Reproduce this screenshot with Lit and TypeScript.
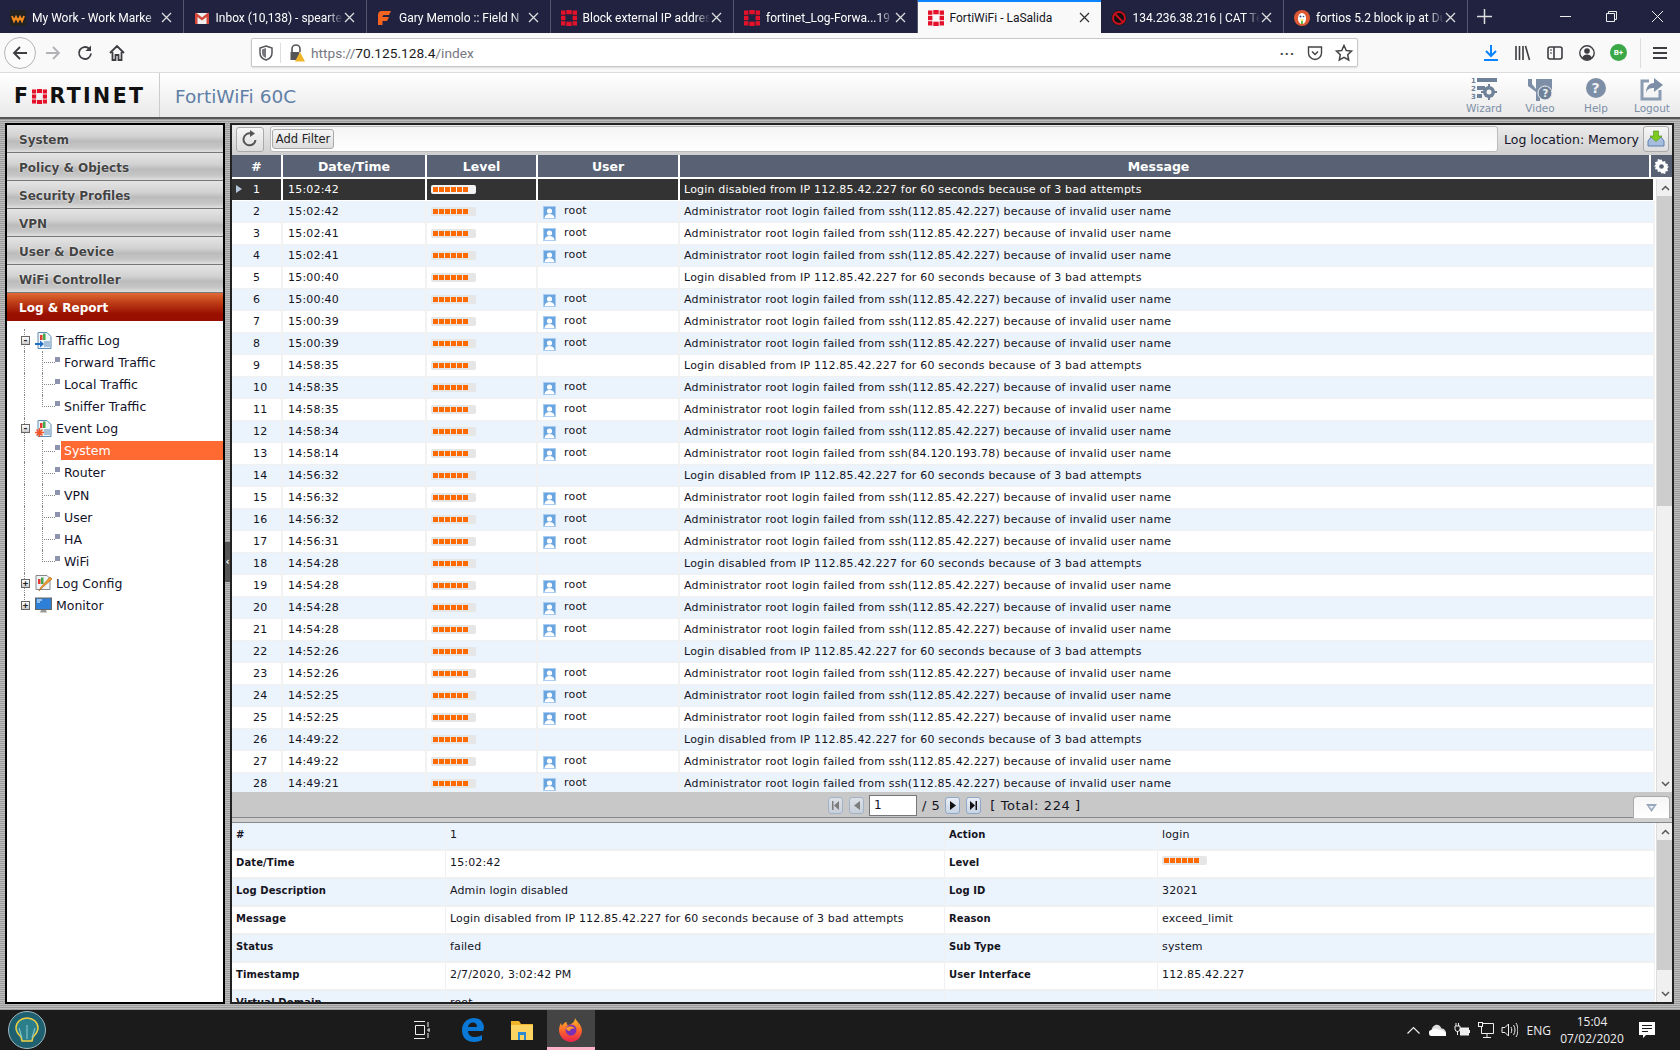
import { LitElement, html, css, svg } from "lit";
import { customElement } from "lit/decorators.js";

const fortiMark = (s: number) => html`<svg class="ico" width=${s} height=${s} viewBox="0 0 16 16"><g fill="#e3122a"><rect x="0" y="0.5" width="4.4" height="4.3"/><rect x="5.3" y="0" width="5.4" height="4.3"/><rect x="11.6" y="0.5" width="4.4" height="4.3"/><rect x="0" y="5.8" width="4.4" height="4.4"/><rect x="11.6" y="5.8" width="4.4" height="4.4"/><rect x="0" y="11.2" width="4.4" height="4.3"/><rect x="5.3" y="11.7" width="5.4" height="4.3"/><rect x="11.6" y="11.2" width="4.4" height="4.3"/></g></svg>`;

const TABS: { t: string; i: any; active?: boolean }[] = [
  { t: "My Work - Work Marke", i: html`<svg class="ico" width="16" height="16" viewBox="0 0 16 16"><rect width="16" height="16" rx="1" fill="#222"/><path d="M2 6l2 5 2-4 2 4 2-4 2 4 2-5" fill="none" stroke="#f58a1f" stroke-width="2"/></svg>` },
  { t: "Inbox (10,138) - spearte", i: html`<svg class="ico" width="16" height="16" viewBox="0 0 16 16"><rect x="1" y="3" width="14" height="11" fill="#eee"/><path d="M1 3v11h2.5V7L8 10.5 12.5 7v7H15V3h-1.5L8 7.5 2.5 3z" fill="#d5463a"/></svg>` },
  { t: "Gary Memolo :: Field N", i: html`<svg class="ico" width="16" height="16" viewBox="0 0 16 16"><path d="M1 15V5q0-4 4-4h9L12 5H7Q5.500 5 5.500 6.500V7H12l-2 4H5.500v4z" fill="#f4641e"/></svg>` },
  { t: "Block external IP addres", i: fortiMark(16) },
  { t: "fortinet_Log-Forwa...19", i: fortiMark(16) },
  { t: "FortiWiFi - LaSalida", i: fortiMark(16), active: true },
  { t: "134.236.38.216 | CAT Tel", i: html`<svg class="ico" width="16" height="16" viewBox="0 0 16 16"><circle cx="8" cy="8" r="7.500" fill="#111"/><circle cx="8" cy="8" r="6" fill="none" stroke="#c8101f" stroke-width="2"/><path d="M3.500 3.500l9 9" stroke="#c8101f" stroke-width="2"/></svg>` },
  { t: "fortios 5.2 block ip at Du", i: html`<svg class="ico" width="16" height="16" viewBox="0 0 16 16"><circle cx="8" cy="8" r="8" fill="#de5833"/><ellipse cx="8" cy="8.500" rx="4" ry="5.500" fill="#fff"/><circle cx="6.500" cy="6.500" r="1" fill="#2d4f8e"/><circle cx="9.500" cy="6.500" r=".8" fill="#2d4f8e"/><path d="M6 9.500h4l-2 1.500z" fill="#fdd20a"/><path d="M7 11h2v3H7z" fill="#65bc46"/></svg>` },
];

const MENU = ["System", "Policy & Objects", "Security Profiles", "VPN", "User & Device", "WiFi Controller"];

type R = [string, boolean, string?];
const ROWS: R[] = [
  ["15:02:42", true], ["15:02:42", false], ["15:02:41", false], ["15:02:41", false],
  ["15:00:40", true], ["15:00:40", false], ["15:00:39", false], ["15:00:39", false],
  ["14:58:35", true], ["14:58:35", false], ["14:58:35", false], ["14:58:34", false],
  ["14:58:14", false, "84.120.193.78"], ["14:56:32", true], ["14:56:32", false], ["14:56:32", false],
  ["14:56:31", false], ["14:54:28", true], ["14:54:28", false], ["14:54:28", false],
  ["14:54:28", false], ["14:52:26", true], ["14:52:26", false], ["14:52:25", false],
  ["14:52:25", false], ["14:49:22", true], ["14:49:22", false], ["14:49:21", false],
];

const DISABLED = "Login disabled from IP 112.85.42.227 for 60 seconds because of 3 bad attempts";
const failed = (ip: string) => `Administrator root login failed from ssh(${ip}) because of invalid user name`;

const bar = () => html`<span class="bar">${[0, 1, 2, 3, 4, 5].map(() => html`<i></i>`)}</span>`;

const userIcon = html`<svg class="uicon" width="13" height="13" viewBox="0 0 13 13"><rect width="13" height="13" fill="#a9cdf0"/><rect x="1" y="1" width="11" height="11" fill="#6aa5e0"/><circle cx="6.500" cy="5" r="2.600" fill="#fff"/><path d="M1.500 12c.5-3 2.500-4 5-4s4.500 1 5 4z" fill="#fff"/></svg>`;

const DETAILS: [string, any, string, any][] = [
  ["#", "1", "Action", "login"],
  ["Date/Time", "15:02:42", "Level", bar()],
  ["Log Description", "Admin login disabled", "Log ID", "32021"],
  ["Message", DISABLED, "Reason", "exceed_limit"],
  ["Status", "failed", "Sub Type", "system"],
  ["Timestamp", "2/7/2020, 3:02:42 PM", "User Interface", "112.85.42.227"],
  ["Virtual Domain", "root", "", ""],
];

const tb = (w: number, inner: any, h = 18, vb = "0 0 18 18") => html`<svg class="ico" width=${w} height=${h} viewBox=${vb}>${inner}</svg>`;

@customElement("app-root")
export class AppRoot extends LitElement {
  static styles = css`
    :host { display: block; width: 1680px; height: 1050px; overflow: hidden; font-family: "DejaVu Sans", Verdana, sans-serif; }
    * { box-sizing: border-box; }
    .ico { display: block; flex: none; }
    .root { display: flex; flex-direction: column; height: 1050px; }

    .tabs { height: 33px; background: #20223f; display: flex; flex: none; font-family: Roboto, sans-serif; font-size: 12px; color: #fff; }
    .tab { width: 183.500px; display: flex; align-items: center; padding: 2px 11px 0 10px; gap: 6px; border-right: 1px solid #55576e; }
    .tab.on { background: #f9f9fa; color: #16161c; border-right: 0; border-top: 2px solid #0a84ff; width: 183px; padding-top: 0; }
    .tab .name { flex: 1; margin-right: -5px; white-space: nowrap; overflow: hidden; -webkit-mask-image: linear-gradient(90deg, #000 88%, transparent); mask-image: linear-gradient(90deg, #000 88%, transparent); }
    .tab.on .name { -webkit-mask-image: none; mask-image: none; }
    .plus { width: 34px; display: flex; align-items: center; justify-content: center; }
    .winbtns { margin-left: auto; display: flex; }
    .winbtn { width: 46px; display: flex; align-items: center; justify-content: center; }

    .nav { height: 40px; flex: none; background: #f9f9fa; border-bottom: 1px solid #dcdcdc; display: flex; align-items: center; position: relative; }
    .back { width: 32px; height: 32px; flex: none; border-radius: 50%; border: 1px solid #b5b5b5; margin-left: 4px; background: #fbfbfb; display: flex; align-items: center; justify-content: center; }
    .navbtn { width: 32px; flex: none; display: flex; justify-content: center; }
    .addr { flex: none; margin-left: 118px; width: 1107px; height: 29px; background: #fff; border: 1px solid #c8c8c8; border-radius: 2px; display: flex; align-items: center; box-shadow: 0 1px 2px rgba(0,0,0,.12); font-family: Roboto, sans-serif; font-size: 13.700px; color: #77777f; }
    .addr b { font-weight: 400; color: #1b1b22; }
    .addr .sep { width: 1px; height: 20px; background: #ddd; margin: 0 7px 0 6px; }
    .addr .url { margin-left: 5px; flex: 1; }
    .addr .end { display: flex; align-items: center; gap: 12px; padding-right: 4px; }
    .navr { display: flex; align-items: center; margin-left: 124px; flex: none; }
    .navr > * { margin-right: 14px; }
    .navr > *:last-child { margin-right: 0; }
    .navsep { width: 1px; height: 30px; background: #ddd; margin: 0 10px 0 -1px !important; }
    .badge { width: 17px; height: 17px; border-radius: 50%; background: #3aa846; color: #fff; font: 700 8px/17px Roboto, sans-serif; text-align: center; }

    .hdr { height: 46px; flex: none; background: linear-gradient(#fff, #e9e9ea); border-bottom: 2px solid #555; display: flex; align-items: stretch; }
    .logo { width: 160px; border-right: 1px solid #ccc; display: flex; align-items: center; padding: 3px 0 0 14px; }
    .logotxt { font: 700 20.500px/1 "DejaVu Sans", sans-serif; color: #111; letter-spacing: 2.400px; display: flex; align-items: center; gap: 2px; }
    .model { padding: 2px 0 0 15px; align-self: center; font-size: 18.500px; color: #5f7fa6; flex: 1; }
    .hbtn { width: 56px; display: flex; flex-direction: column; align-items: center; justify-content: flex-end; padding-bottom: 3px; font-size: 10.500px; color: #7d8fa6; gap: 1px; }
    .hbtns { display: flex; padding-right: 0; }

    .main { flex: 1; min-height: 0; display: flex; padding: 4px 6px 6px 5px; background: repeating-linear-gradient(#9b9b9b 0 1px, #bdbdbd 1px 2px); }
    .side { width: 220px; border: 1px solid #000; border-width: 2px; background: #fff; padding: 0; flex: none; overflow: hidden; }
    .mi { height: 28px; display: flex; align-items: center; padding: 1px 0 0 12px; font-weight: 700; font-size: 12px; color: #444; text-shadow: 0 0 2px #fff; background: linear-gradient(#e4e4e4 0, #d2d2d2 40%, #bbb 58%, #c6c6c6 80%, #dedede 96%, #777 96.500%); }
    .mi.on { color: #fff; text-shadow: none; background: linear-gradient(#e26a35 0, #c2421a 30%, #991000 75%, #980e00 100%); }
    .tree { padding-top: 8px; font-size: 12.500px; color: #12122a; }
    .tr { height: 22.150px; display: flex; align-items: center; position: relative; }
    .tr.top { padding-left: 14px; gap: 1px; }
    .tr.top::before { content: ""; position: absolute; left: 17px; top: 0; bottom: 0; border-left: 1px dotted #888; }
    .tr.last::before { bottom: 50%; }
    .exp { width: 9px; height: 9px; border: 1px solid #666; background: linear-gradient(#fff,#ccc); position: relative; z-index: 1; font: 700 9px/7px "DejaVu Sans Mono", monospace; text-align: center; color: #222; flex: none; margin-right: 4px; }
    .tr.sub { padding-left: 48px; }
    .tr.sub::before { content: ""; position: absolute; left: 17px; top: 0; bottom: 0; border-left: 1px dotted #888; }
    .tr.sub::after { content: ""; position: absolute; left: 35px; top: 0; height: 50%; width: 12px; border-left: 1px dotted #888; border-bottom: 1px dotted #888; }
    .tr.sub.cont .stem { position: absolute; left: 35px; top: 50%; bottom: 0; border-left: 1px dotted #888; }
    .bul { width: 5px; height: 5px; background: #8c94b0; flex: none; margin-right: 1px; transform: translateY(-3px); }
    .lbl { padding: 0 3px; flex: 1; height: 19px; line-height: 19px; }
    .lbl.sel { background: #ff6a33; color: #fff; }

    .split { width: 5px; flex: none; display: flex; align-items: center; padding-bottom: 4px; }
    .split div { width: 5px; height: 40px; background: #555; color: #fff; font: 700 10px/40px "DejaVu Sans", sans-serif; text-align: center; }

    .panel { flex: 1; min-width: 0; display: flex; flex-direction: column; border: 2px solid #222; background: #fff; font-size: 11px; color: #14141f; }
    .bar1 { height: 30px; flex: none; display: flex; align-items: center; padding: 0 3px 2px 4px; background: linear-gradient(#ececec, #cfcfcf); }
    .btn { border: 1px solid #aaa; border-radius: 3px; background: linear-gradient(#f6f6f6, #ddd); display: flex; align-items: center; justify-content: center; }
    .rf { width: 28px; height: 25px; flex: none; }
    .filter { width: 1228px; height: 26px; flex: none; margin-left: 6px; background: linear-gradient(#f4f4f4,#fff); border: 1px solid #bbb; border-radius: 3px; display: flex; align-items: center; padding-left: 1px; }
    .add { width: 62px; height: 20px; font-size: 11.500px; color: #222; }
    .loc { margin-left: 6px; font-size: 12.500px; white-space: nowrap; flex: 1; color: #14142a; }
    .exp2 { width: 26px; height: 26px; flex: none; }

    .thead { height: 24px; flex: none; display: grid; grid-template-columns: 51px 144px 111px 142px 971px 21px; background: #fff; padding-bottom: 2px; }
    .th { background: #586274; color: #fff; font-weight: 700; font-size: 12.500px; display: flex; align-items: center; justify-content: center; border-right: 2px solid #fff; }
    .th.msg { padding-right: 12px; }
    .th:last-child { border-right: 0; }
    .bodywrap { height: 613px; flex: none; display: flex; overflow: hidden; }
    .rows { width: 1423px; flex: none; overflow: hidden; letter-spacing: .2px; }
    .row { height: 22px; display: grid; grid-template-columns: 51px 144px 111px 142px 975px; align-items: stretch; border-bottom: 1px solid #f0f0f0; background: #fff; position: relative; }
    .row.alt { background: #ebf3fc; }
    .row.cur { background: #333; color: #fff; border-bottom: 1px solid #fff; }
    .c { display: flex; align-items: center; border-right: 2px solid #f2f2f2; white-space: nowrap; padding-left: 4px; overflow: hidden; }
    .row.cur .c { border-right-color: #fff; }
    .c.n { padding-left: 21px; }
    .c.t { padding-left: 5px; }
    .c.u { padding-left: 5px; gap: 8px; }
    .c.u span { transform: translateY(-1px); }
    .uicon { transform: translateY(1px); flex: none; }
    .arrow { position: absolute; left: 4px; top: 6px; width: 0; height: 0; border-left: 6px solid #b6c6dc; border-top: 4.500px solid transparent; border-bottom: 4.500px solid transparent; }
    .bar { display: flex; gap: 1px; width: 45px; height: 9px; padding: 2px 0 0 2px; background: #e6e6e6; border-radius: 2px; }
    .bar i { display: block; width: 5px; height: 5px; background: #ff6a00; }
    .row.cur .bar { background: #f2f2f2; }
    .sb { width: 17px; margin-left: 1px; flex: none; background: #f0f0f0; display: flex; flex-direction: column; border-left: 1px solid #ddd; }
    .sbb { height: 17px; flex: none; display: flex; align-items: center; justify-content: center; }
    .sbt { background: #cdcdcd; flex: none; }
    .sbt.a { height: 310px; }
    .sbt.b { height: 130px; }
    .gap { flex: 1; }

    .pager { height: 26px; flex: none; background: #c8c8c8; border-bottom: 1px solid #888; display: flex; align-items: center; font-size: 13px; padding: 2px 0 0 596px; position: relative; }
    .pg { width: 15px; height: 17px; border: 1px solid #8fa8c8; border-radius: 3px; background: linear-gradient(#e8eef6,#c8d4e4); display: flex; align-items: center; justify-content: center; margin-right: 6px; }
    .pg.off { opacity: .65; }
    .pg svg { display: block; }
    .pinput { width: 48px; height: 21px; background: #fff; border: 1px solid #777; margin-left: -1px; padding-left: 4px; line-height: 19px; font-size: 12px; }
    .pdiv { margin: 0 5px 0 5px; letter-spacing: .5px; }
    .ptot { margin-left: 3px; letter-spacing: .6px; }
    .ptab { position: absolute; right: 2px; bottom: -1px; width: 37px; height: 22px; background: linear-gradient(#f6f6f6,#fff); border: 1px solid #aaa; border-bottom: 0; border-radius: 4px 4px 0 0; display: flex; justify-content: center; align-items: center; }
    .dspace { height: 5px; flex: none; background: #d0d0d0; border-bottom: 1px solid #888; }

    .detail { flex: 1; min-height: 0; display: flex; overflow: hidden; background: #fff; }
    .dt { width: 1423px; flex: none; overflow: hidden; letter-spacing: .15px; }
    .dr { height: 28px; flex: none; display: grid; grid-template-columns: 214px 499px 213px 497px; border-bottom: 2px solid #f0f0f0; background: #fff; }
    .dr.alt { background: #ebf3fc; }
    .dc { border-right: 1px solid #f0f0f0; padding: 5px 0 0 4px; line-height: 13px; white-space: nowrap; }
    .dc.k { font-weight: 700; font-size: 10px; letter-spacing: .1px; }

    .task { height: 40px; flex: none; background: #1b1b1b; display: flex; align-items: center; color: #eee; font-family: "Open Sans", sans-serif; font-size: 12px; }
    .orb { width: 38px; height: 38px; margin-left: 8px; }
    .ffx { width: 48px; height: 40px; background: #444; border-bottom: 3px solid #ffb3c8; display: flex; align-items: center; justify-content: center; padding-top: 2px; }
    .tray { margin-left: auto; display: flex; align-items: center; }
    .clock { width: 80px; margin-left: 1px; text-align: center; line-height: 17px; }
  `;

  render() {
    const g = "#3d3d42";
    const up = html`<div class="sbb"><svg class="ico" width="9" height="6" viewBox="0 0 9 6"><path d="M1 5l3.500-3.500L8 5" fill="none" stroke="#555" stroke-width="1.500"/></svg></div>`;
    const down = html`<div class="sbb"><svg class="ico" width="9" height="6" viewBox="0 0 9 6"><path d="M1 1l3.500 3.500L8 1" fill="none" stroke="#555" stroke-width="1.500"/></svg></div>`;
    return html`<div class="root">
      <div class="tabs">
        ${TABS.map((t) => html`<div class="tab ${t.active ? "on" : ""}">${t.i}<span class="name">${t.t}</span>
          <svg class="ico" width="11" height="11" viewBox="0 0 11 11"><path d="M1 1l9 9M10 1l-9 9" stroke=${t.active ? "#333" : "#ddd"} stroke-width="1.300"/></svg></div>`)}
        <div class="plus"><svg class="ico" width="15" height="15" viewBox="0 0 15 15"><path d="M7.500 0v15M0 7.500h15" stroke="#ddd" stroke-width="1.500"/></svg></div>
        <div class="winbtns">
          <div class="winbtn"><svg class="ico" width="11" height="11" viewBox="0 0 11 11"><path d="M0 5.500h11" stroke="#eee"/></svg></div>
          <div class="winbtn"><svg class="ico" width="11" height="11" viewBox="0 0 11 11"><path d="M.5 2.500h8v8h-8zM2.500 2.500v-2h8v8h-2" fill="none" stroke="#eee"/></svg></div>
          <div class="winbtn"><svg class="ico" width="11" height="11" viewBox="0 0 11 11"><path d="M0 0l11 11M11 0L0 11" stroke="#eee"/></svg></div>
        </div>
      </div>

      <div class="nav">
        <div class="back">${tb(18, svg`<path d="M16 9H3M9 3L3 9l6 6" fill="none" stroke=${g} stroke-width="1.800"/>`)}</div>
        <div class="navbtn" style="margin-left:1px">${tb(18, svg`<path d="M2 9h13M9 3l6 6-6 6" fill="none" stroke="#b2b2b6" stroke-width="1.800"/>`)}</div>
        <div class="navbtn">${tb(18, svg`<path d="M15 9.500A6 6 0 1 1 13 4.500" fill="none" stroke=${g} stroke-width="1.800"/><path d="M15 1.500V7H9.500z" fill=${g}/>`)}</div>
        <div class="navbtn">${tb(18, svg`<path d="M2 9l7-7 7 7M4.500 8v8h3v-5h3v5h3V8" fill="none" stroke=${g} stroke-width="1.800"/>`)}</div>
        <div class="addr">
          <span style="margin-left:6px">${tb(16, svg`<path d="M8 1l6 2v5c0 4-3 6-6 7-3-1-6-3-6-7V3z" fill="none" stroke="#55555a" stroke-width="1.500"/><path d="M8 3v10c-2-1-4-2-4-5V4.500z" fill="#77777c"/>`, 16, "0 0 16 16")}</span>
          <span class="sep"></span>
          ${tb(18, svg`<path d="M4 8V5a4 4 0 0 1 8 0v3" fill="none" stroke="#555" stroke-width="1.600"/><rect x="2.500" y="8" width="9" height="8" fill="#555"/><path d="M12 8l5 9.500H7z" fill="#f0b429"/>`)}
          <span class="url">https://<b>70.125.128.4</b>/index</span>
          <span class="end">
            <span style="font:700 14px/1 Roboto,sans-serif;color:#444;letter-spacing:1px;transform:translateY(-3px)">...</span>
            ${tb(16, svg`<path d="M1.500 2h13a1 1 0 0 1 0 1v5a6.500 6.500 0 0 1-13 0V3z" fill="none" stroke="#444" stroke-width="1.400"/><path d="M5 6.500l3 3 3-3" fill="none" stroke="#444" stroke-width="1.500"/>`, 16, "0 0 16 16")}
            ${tb(18, svg`<path d="M9 1.500l2.300 5 5.200.6-3.800 3.600 1 5.300L9 13.300 4.300 16l1-5.300L1.500 7.100l5.200-.6z" fill="none" stroke="#444" stroke-width="1.500"/>`)}
          </span>
        </div>
        <div class="navr">
          ${tb(18, svg`<path d="M9 1v11M4 7l5 5 5-5M2 16h14" fill="none" stroke="#0a84ff" stroke-width="2"/>`)}
          ${tb(18, svg`<path d="M2 2v14M5.500 2v14M9 2v14M11.500 2l4 14" fill="none" stroke=${g} stroke-width="1.600"/>`)}
          ${tb(18, svg`<rect x="2" y="3" width="14" height="12" rx="2" fill="none" stroke=${g} stroke-width="1.600"/><path d="M8 3v12" stroke=${g} stroke-width="1.600"/><path d="M4 6h2M4 9h2" stroke=${g}/>`)}
          ${tb(18, svg`<circle cx="9" cy="9" r="7.200" fill="none" stroke=${g} stroke-width="1.400"/><circle cx="9" cy="7" r="2.800" fill=${g}/><path d="M4 14c1-3 3-3.500 5-3.500s4 .5 5 3.500a7 7 0 0 1-10 0z" fill=${g}/>`)}
          <div class="badge">B+</div>
          <div class="navsep"></div>
          ${tb(18, svg`<path d="M2 4h14M2 9h14M2 14h14" stroke=${g} stroke-width="1.800"/>`)}
        </div>
      </div>

      <div class="hdr">
        <div class="logo"><div class="logotxt"><span>F</span>${fortiMark(15)}<span>RTINET</span></div></div>
        <div class="model">FortiWiFi 60C</div>
        <div class="hbtns">
          <div class="hbtn"><svg class="ico" width="26" height="24" viewBox="0 0 26 24"><g fill="#6f8198"><rect x="6" y="1" width="20" height="4"/><rect x="6" y="9" width="8" height="4"/><rect x="6" y="17" width="5" height="4"/><circle cx="18" cy="15" r="6"/><path d="M17 7h2v16h-2zM10 14h16v2H10z"/></g><circle cx="18" cy="15" r="2.500" fill="#f2f2f3"/><text x="0" y="6" font-size="7" font-weight="700" fill="#6f8198">1</text><text x="0" y="14" font-size="7" font-weight="700" fill="#6f8198">2</text><text x="0" y="22" font-size="7" font-weight="700" fill="#6f8198">3</text></svg>Wizard</div>
          <div class="hbtn"><svg class="ico" width="26" height="24" viewBox="0 0 26 24"><path d="M1 2h4v5l4 5V2h16v12H13v10H9v-9L1 9z" fill="#7d8fa6"/><circle cx="18" cy="16" r="7" fill="#6f8198" stroke="#f2f2f3"/><text x="15.500" y="20" font-size="10" font-weight="700" fill="#f2f2f3">?</text></svg>Video</div>
          <div class="hbtn"><svg class="ico" width="22" height="24" viewBox="0 0 22 24"><circle cx="11" cy="11" r="10" fill="#7d8fa6"/><text x="6.500" y="16" font-size="14" font-weight="700" fill="#f2f2f3">?</text></svg>Help</div>
          <div class="hbtn"><svg class="ico" width="24" height="24" viewBox="0 0 24 24"><path d="M9 4H2v18h18v-9" fill="none" stroke="#8a9cb2" stroke-width="3"/><path d="M14 1l9 7-9 7v-4c-4 0-7 1-8 5 0-6 3-10 8-10z" fill="#7d8fa6"/></svg>Logout</div>
        </div>
      </div>

      <div class="main">
        <div class="side">
          ${MENU.map((m) => html`<div class="mi">${m}</div>`)}
          <div class="mi on">Log &amp; Report</div>
          <div class="tree">
            <div class="tr top"><span class="exp">-</span><svg class="ico" width="17" height="17" viewBox="0 0 17 17"><path d="M3 .5h9l4 4v12H3z" fill="#eef5fb" stroke="#5b8cb5"/><rect x="5" y="3" width="2.500" height="5" fill="#e03c31"/><rect x="8" y="1.500" width="2.500" height="6.500" fill="#46a846"/><path d="M9 10h6M9 12h6M9 14h6" stroke="#5b8cb5"/><path d="M0 11h5V8.500L9 12l-4 3.500V13H0z" fill="#1f6fc4"/></svg><span class="lbl">Traffic Log</span></div>
            ${["Forward Traffic", "Local Traffic", "Sniffer Traffic"].map((l, i) => html`<div class="tr sub ${i < 2 ? "cont" : ""}"><span class="stem"></span><span class="bul"></span><span class="lbl">${l}</span></div>`)}
            <div class="tr top"><span class="exp">-</span><svg class="ico" width="17" height="17" viewBox="0 0 17 17"><path d="M3 .5h9l4 4v12H3z" fill="#eef5fb" stroke="#5b8cb5"/><rect x="5" y="3" width="2.500" height="5" fill="#e03c31"/><rect x="8" y="1.500" width="2.500" height="6.500" fill="#46a846"/><path d="M9 10h6M9 12h6M9 14h6" stroke="#5b8cb5"/><path d="M4.500 8v9M0 12.500h9M1.500 9.500l6 6M7.500 9.500l-6 6" stroke="#f0562a" stroke-width="1.500"/></svg><span class="lbl">Event Log</span></div>
            ${["System", "Router", "VPN", "User", "HA", "WiFi"].map((l, i) => html`<div class="tr sub ${i < 5 ? "cont" : ""}"><span class="stem"></span><span class="bul"></span><span class="lbl ${i === 0 ? "sel" : ""}">${l}</span></div>`)}
            <div class="tr top"><span class="exp">+</span><svg class="ico" width="17" height="17" viewBox="0 0 17 17"><path d="M1 .5h11l3 3v11H1z" fill="#eef5fb" stroke="#888"/><rect x="3" y="4" width="2.500" height="5" fill="#e03c31"/><rect x="6" y="2.500" width="2.500" height="6.500" fill="#46a846"/><path d="M4 16l2-4 9-10 2 2-10 9z" fill="#f0a030" stroke="#b05a10" stroke-width=".6"/></svg><span class="lbl">Log Config</span></div>
            <div class="tr top last"><span class="exp">+</span><svg class="ico" width="17" height="17" viewBox="0 0 17 17"><rect x=".5" y="1" width="16" height="11.500" fill="#2d7fd8" stroke="#666"/><path d="M2 3h5M2 5h3" stroke="#fff"/><path d="M6 13h5l1 2.500H5z" fill="#999"/></svg><span class="lbl">Monitor</span></div>
          </div>
        </div>
        <div class="split"><div>‹</div></div>
        <div class="panel">
          <div class="bar1">
            <div class="btn rf">${tb(18, svg`<path d="M14.500 10A6 6 0 1 1 10 3.500" fill="none" stroke="#555" stroke-width="2"/><path d="M9 0l5 3.500L9 7z" fill="#555"/>`)}</div>
            <div class="filter"><div class="btn add">Add Filter</div></div>
            <div class="loc">Log location: Memory</div>
            <div class="btn exp2"><svg class="ico" width="18" height="18" viewBox="0 0 18 18"><path d="M1 11l3-4h10l3 4v5H1z" fill="#a6bddd" stroke="#5f7fae"/><path d="M6.500 1h5v5H15l-6 5.500L3 6h3.500z" fill="#7ccb1e" stroke="#4f8f10" stroke-width=".6"/></svg></div>
          </div>
          <div class="thead">
            <div class="th">#</div><div class="th">Date/Time</div><div class="th">Level</div><div class="th">User</div><div class="th msg">Message</div>
            <div class="th"><svg class="ico" width="15" height="15" viewBox="0 0 16 16"><path d="M8 .5l1.300 2.300 2.600-.7.400 2.600 2.600.5-.7 2.600L16 8l-1.800 2.200.7 2.600-2.600.5-.4 2.600-2.600-.7L8 15.500l-1.300-2.300-2.600.7-.4-2.600-2.600-.5.7-2.600L0 8l1.800-2.200-.7-2.600 2.600-.5.4-2.600 2.600.7z" fill="#fff"/><circle cx="8" cy="8" r="2.500" fill="#586274"/></svg></div>
          </div>
          <div class="bodywrap">
            <div class="rows">
              ${ROWS.map((r, i) => html`<div class="row ${i === 0 ? "cur" : i % 2 ? "alt" : ""}">
                ${i === 0 ? html`<span class="arrow"></span>` : ""}
                <div class="c n">${i + 1}</div><div class="c t">${r[0]}</div><div class="c">${bar()}</div>
                <div class="c u">${r[1] ? "" : html`${userIcon}<span>root</span>`}</div>
                <div class="c">${r[1] ? DISABLED : failed(r[2] ?? "112.85.42.227")}</div>
              </div>`)}
            </div>
            <div class="sb">${up}<div class="sbt a"></div><div class="gap"></div>${down}</div>
          </div>
          <div class="pager">
            <div class="pg off"><svg width="7" height="9" viewBox="0 0 7 9"><path d="M0 0h1.500v9H0zM7 0v9L2 4.500z" fill="#555"/></svg></div>
            <div class="pg off"><svg width="6" height="9" viewBox="0 0 6 9"><path d="M6 0v9L0 4.500z" fill="#555"/></svg></div>
            <div class="pinput">1</div>
            <span class="pdiv">/ 5</span>
            <div class="pg"><svg width="6" height="9" viewBox="0 0 6 9"><path d="M0 0v9l6-4.500z" fill="#111"/></svg></div>
            <div class="pg"><svg width="7" height="9" viewBox="0 0 7 9"><path d="M0 0v9l5-4.500zM5.500 0H7v9H5.500z" fill="#111"/></svg></div>
            <span class="ptot">[ Total: 224 ]</span>
            <div class="ptab"><svg class="ico" width="11" height="9" viewBox="0 0 11 9"><path d="M0 1h11L5.500 9z" fill="#9aa8bc"/><path d="M3 3h5L5.500 6z" fill="#eef"/></svg></div>
          </div>
          <div class="dspace"></div>
          <div class="detail">
            <div class="dt">
              ${DETAILS.map((d, i) => html`<div class="dr ${i % 2 ? "" : "alt"}"><div class="dc k">${d[0]}</div><div class="dc">${d[1]}</div><div class="dc k">${d[2]}</div><div class="dc">${d[3]}</div></div>`)}
            </div>
            <div class="sb">${up}<div class="sbt b"></div><div class="gap"></div>${down}</div>
          </div>
        </div>
      </div>

      <div class="task">
        <div class="orb"><svg class="ico" width="38" height="38" viewBox="0 0 38 38"><circle cx="19" cy="19" r="18.500" fill="#1e5f70" stroke="#9fb9c0"/><path d="M19 7c-6 0-11 4-11 10 0 4 3 7 5 9l1 4h10l1-4c2-2 5-5 5-9 0-6-5-10-11-10z" fill="#2b7f8a" stroke="#f0d040" stroke-width="1.500"/><path d="M19 28V14M14 27l-3-10M24 27l3-10" stroke="#7fc0c8" stroke-width="1.200"/></svg></div>
        <div style="margin-left:367px"><svg class="ico" width="17" height="18" viewBox="0 0 17 18"><path d="M1 .5h11M1 17.500h11M2.500 4.500h9v9h-9z" fill="none" stroke="#eee"/><path d="M15 1v5M15 8h2v2h-2zM15 12v5" stroke="#eee"/></svg></div>
        <div style="margin-left:32px"><svg class="ico" width="22" height="24" viewBox="0 0 22 24"><path d="M21 13H6c.3 4 3 6 7 6 3 0 5-1 7-2v5c-2 1-5 2-8 2-7 0-12-4-12-12C0 5 5 0 12 0c6 0 10 4 10 10zM15 9c0-3-1.500-4.500-4-4.500S6.500 6 6 9z" fill="#0a78d7"/></svg></div>
        <div style="margin-left:27px"><svg class="ico" width="22" height="20" viewBox="0 0 22 20"><path d="M0 1h8l2 3h12v16H0z" fill="#f0b429"/><rect y="5" width="22" height="15" fill="#fcd462"/><path d="M7 12h8v8h-2v-5H9v5H7z" fill="#2a8ad4"/></svg></div>
        <div class="ffx" style="margin-left:14px"><svg class="ico" width="24" height="24" viewBox="0 0 24 24"><defs><linearGradient id="f" x1="0" y1="0" x2="0" y2="1"><stop offset="0" stop-color="#ffbd2e"/><stop offset=".5" stop-color="#ff6a2a"/><stop offset="1" stop-color="#e8214e"/></linearGradient></defs><path d="M16 0c1 3 6 6 7 12 0 7-5 12-11 12S0 19 0 12c0-3 1-5 2-7l1 3c1-2 3-4 5-4-1 2 0 3 1 3 3 0 7-3 7-7z" fill="url(#f)"/><circle cx="12" cy="12" r="5.500" fill="#7b2fb5"/><path d="M7 10c2-2 7-3 9 1-3-1-5 0-5 2-2 0-4-1-4-3z" fill="#ff9a2a"/></svg></div>
        <div class="tray">
          <svg class="ico" style="margin-right:9px" width="13" height="8" viewBox="0 0 13 8"><path d="M.5 7.500l6-6 6 6" fill="none" stroke="#eee" stroke-width="1.200"/></svg>
          <svg class="ico" style="margin-right:8px" width="17" height="12" viewBox="0 0 17 12"><path d="M3 12a3 3 0 0 1-.5-6C3 3 6 0 9 1c2 .5 3 2 3.500 3.500 2.500 0 4.500 2 4.500 4.500 0 2-1 3-3 3z" fill="#ddd"/><path d="M0 9a3 3 0 0 1 2.500-3C5 4 8 4 11 6c3 0 5 2 6 3v3H2z" fill="#fff"/></svg>
          <svg class="ico" style="margin-right:8px" width="16" height="14" viewBox="0 0 16 14"><path d="M2 0v3M4.500 0v3M1 3h5v3a2.500 2.500 0 0 1-5 0zM3.500 8v4" fill="none" stroke="#eee"/><rect x="6" y="4.500" width="9" height="8" fill="#eee"/><path d="M15.500 7v3" stroke="#eee"/></svg>
          <svg class="ico" style="margin-right:7px" width="16" height="16" viewBox="0 0 16 16"><path d="M3.500 1.500h12v10h-12zM9 12v3M5 15.500h8" fill="none" stroke="#eee"/><rect x="0.500" y=".5" width="4" height="4" fill="#1b1b1b" stroke="#eee"/></svg>
          <svg class="ico" style="margin-right:9px" width="17" height="16" viewBox="0 0 17 16"><path d="M1 5.500h3L7.500 2v12L4 10.500H1z" fill="none" stroke="#eee"/><path d="M10 5c1 2 1 4 0 6M12.500 3c2 3 2 7 0 10M15 1c2.500 4 2.500 10 0 14" fill="none" stroke="#eee"/></svg>
          <span>ENG</span>
          <div class="clock"><div>15:04</div><div>07/02/2020</div></div>
          <svg class="ico" style="margin:0 24px 0 7px" width="17" height="17" viewBox="0 0 17 17"><path d="M0 0h16v13H7l-3 3v-3H0z" fill="#fff"/><path d="M3 3.500h10M3 6.500h10M3 9.500h6" stroke="#1b1b1b"/></svg>
        </div>
      </div>
    </div>`;
  }
}
